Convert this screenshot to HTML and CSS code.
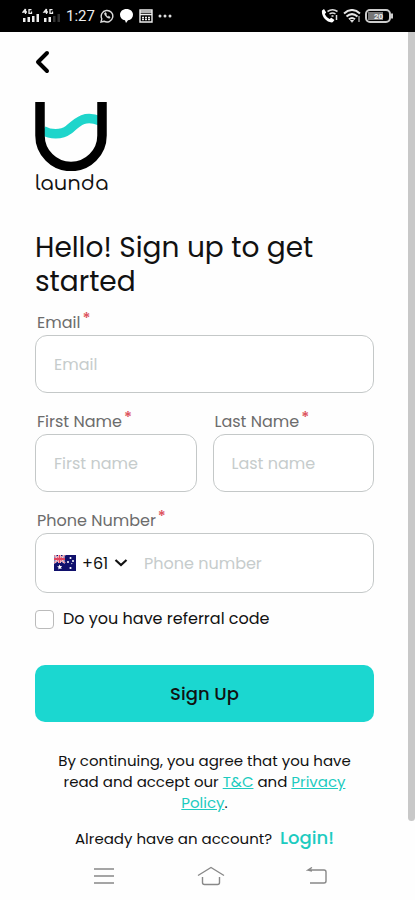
FILE: index.html
```html
<!DOCTYPE html>
<html lang="en">
<head>
<meta charset="utf-8">
<meta name="viewport" content="width=device-width, initial-scale=1">
<title>Launda – Sign up</title>
<link rel="stylesheet" href="styles.css">
</head>
<body>
<header class="status">
  <div class="status-group">
    <svg width="39" height="16" viewBox="0 0 39 16" fill="#eee" aria-hidden="true">
      <g fill="none" stroke="#eee" stroke-width="1.3"><path d="M3.5 1 1 4h4M3.5 1v5M9.500 1.700H7v3.600h2.500V3.500M24.500 1 22 4h4M24.500 1v5M30.500 1.700H28v3.600h2.500V3.500"/></g>
      <path d="M1 10h2.500v4H1zM5.500 9h2.500v5H5.500zM10 8h2.500v6H10zM14.500 6h2.500v8h-2.500zM22 10h2.500v4H22zM26.500 9h2.500v5h-2.500z"/>
      <path fill="#333" d="M31 8h2.500v6H31zM35.500 6H38v8h-2.500z"/>
    </svg>
    <span class="clock">1:27</span>
    <svg width="14" height="14" viewBox="0 0 14 14" fill="none" stroke="#ddd" stroke-width="1.400" aria-hidden="true"><path d="m1 13 .8-3.200A5.800 5.800 0 1 1 4 12.200z"/><path d="M4.600 4c-.6 1.800 2.800 5.600 5 5.200l.5-1.200-1.600-.8-.8.6L6 6l.5-.9-.7-1.500z" fill="#ddd" stroke-width=".6"/></svg>
    <svg width="15" height="14" viewBox="0 0 15 14" fill="#fff" aria-hidden="true"><path d="M7.500 0C3.800 0 1 2.400 1 5.700c0 3 2.200 5.100 5 5.600L7 14l2-2.700c3-.5 5-2.600 5-5.600C14 2.400 11.200 0 7.500 0z"/></svg>
    <svg width="14" height="14" viewBox="0 0 14 14" fill="none" stroke="#eee" stroke-width="1.400" aria-hidden="true"><path d="M1 1h12v12H1zM1 3h12M1 5.500h12"/><path d="M3 8.500h8M3 10.500h8" stroke-dasharray="2 1"/></svg>
    <svg width="14" height="4" viewBox="0 0 14 4" fill="#ddd" aria-hidden="true"><circle cx="2" cy="2" r="1.500"/><circle cx="7" cy="2" r="1.500"/><circle cx="12" cy="2" r="1.500"/></svg>
  </div>
  <div class="status-group status-right">
    <svg width="18" height="14" viewBox="0 0 18 14" aria-hidden="true"><path fill="#fff" d="M1 1.500 3 0l2.200 3.500-1.400 1.600c1 2.200 2.600 3.900 4.800 4.900l1.700-1.300 3.200 2.300-1.800 2.300C6 14.200 0 7.500 1 1.500z"/><path d="M6.500 2.500Q11.500-.8 16.500 2.500M8.500 5q3-2 6 0M10.500 7h2M15.500 6v5" fill="none" stroke="#ddd" stroke-width="1.500"/></svg>
    <svg width="18" height="14" viewBox="0 0 18 14" fill="none" stroke="#e6e6e6" stroke-width="2" aria-hidden="true"><path d="M1 4.500q8-7 16 0M3.500 7.500q5.500-4.800 11 0M6 10.200q3-2.500 6 0"/><path d="m7.500 11.500 1.500 1.800 1.500-1.800zM16 7v6" stroke-width="1"/></svg>
    <svg width="28" height="14" viewBox="0 0 28 14" aria-hidden="true"><rect x="1" y="1" width="24" height="12" rx="4" fill="none" stroke="#ccc" stroke-width="2"/><path fill="#777" d="M3 3h15v8H3z"/><path fill="#ccc" d="M26 4.500h2v5h-2z"/><text class="battery-text" x="9" y="10">20</text></svg>
  </div>
</header>

<main class="screen">
  <button class="back" type="button" aria-label="Back">
    <svg width="16" height="24" viewBox="0 0 16 24" fill="none" stroke="#000" stroke-width="4" stroke-linecap="round" stroke-linejoin="round"><path d="M12 3 3 12l9 9"/></svg>
  </button>

  <div class="brand">
    <svg width="72" height="69" viewBox="0 0 72 69" fill="none" aria-hidden="true">
      <path d="M8 28.500c7 4 18 5 26-1 9-8 16-15 31-8.500" stroke="#1ed5cb" stroke-width="9.500"/>
      <path d="M5 0v33.500a31 31 0 0 0 62 0V0" stroke="#000" stroke-width="9.500"/>
    </svg>
    <span class="brand-name">launda</span>
  </div>

  <h1>Hello! Sign up to get started</h1>

  <form class="form">
    <div class="field">
      <label for="email">Email<sup>*</sup></label>
      <input class="box" id="email" type="email" placeholder="Email">
    </div>
    <div class="pair">
      <div class="field">
        <label for="first">First Name<sup>*</sup></label>
        <input class="box" id="first" type="text" placeholder="First name">
      </div>
      <div class="field">
        <label for="last">Last Name<sup>*</sup></label>
        <input class="box" id="last" type="text" placeholder="Last name">
      </div>
    </div>
    <div class="field">
      <label for="phone">Phone Number<sup>*</sup></label>
      <div class="box phone">
        <svg width="22" height="16" viewBox="0 0 22 16" aria-hidden="true">
          <path fill="#10106c" d="M0 0h22v16H0z"/>
          <path d="m0 0 11 8M11 0 0 8" stroke="#fff" stroke-width="2"/>
          <path d="M5.500 0v8M0 4h11" stroke="#fff" stroke-width="3"/>
          <path d="M5.500 0v8M0 4h11" stroke="#e0455f" stroke-width="1.800"/>
          <path d="m0 0 11 8M11 0 0 8" stroke="#e0455f" stroke-width=".8"/>
          <g fill="#fff"><path d="m5.500 9.500.8 1.600 1.800-.1-1.100 1.400.7 1.700-1.800-.6-1.500 1 .1-1.900-1.500-1 1.800-.4z"/><circle cx="16.500" cy="3" r="1"/><circle cx="14" cy="7" r="1"/><circle cx="19" cy="6" r="1"/><circle cx="16.500" cy="13" r="1.100"/><circle cx="17.800" cy="8.600" r=".6"/></g>
        </svg>
        <select class="code" aria-label="Country code"><option>+61</option></select>
        <svg class="caret" width="14" height="8" viewBox="0 0 14 8" fill="none" stroke="#111" stroke-width="2.200" aria-hidden="true"><path d="m1.500 1 5.500 5 5.500-5"/></svg>
        <input class="phone-input" id="phone" type="tel" placeholder="Phone number">
      </div>
    </div>
    <label class="referral"><input type="checkbox">Do you have referral code</label>
    <button class="submit" type="submit">Sign Up</button>
  </form>

  <p class="terms">By continuing, you agree that you have read and accept our <a href="#terms">T&amp;C</a> and <a href="#privacy">Privacy Policy</a>.</p>
  <p class="account">Already have an account? <a href="#login">Login!</a></p>
  <div class="scroll-thumb"></div>
</main>

<nav class="system-nav">
  <button type="button" aria-label="Recent apps"><svg width="22" height="18" viewBox="0 0 22 18" fill="none" stroke="#888" stroke-width="1.400"><path d="M1 2h20M1 9h20M1 16h20"/></svg></button>
  <button type="button" aria-label="Home"><svg width="28" height="20" viewBox="0 0 28 20" fill="none" stroke="#888" stroke-width="1.400"><path d="M1 9.500 14 1.500l13 8M5.500 11v5.500q0 2 2 2h13q2 0 2-2V11"/></svg></button>
  <button type="button" aria-label="Back"><svg width="22" height="18" viewBox="0 0 22 18" fill="none" stroke="#888" stroke-width="1.400"><path d="M6 .5 2 3h16q2 0 2 2v9q0 2-2 2H4M2 3l4 1"/></svg></button>
</nav>
</body>
</html>
```
FILE: styles.css
```css
* {
  box-sizing: border-box;
}

body {
  margin: 0;
  min-height: 100vh;
  display: flex;
  flex-direction: column;
  background: #fefefe;
  color: #111;
  font-family: Poppins, Inter, "Open Sans", sans-serif;
  font-size: 16px;
}

button,
input,
select {
  font: inherit;
  color: inherit;
}

button {
  border: 0;
  padding: 0;
  background: none;
}

h1,
p {
  margin: 0;
}

.status {
  display: flex;
  justify-content: space-between;
  align-items: center;
  height: 32px;
  padding: 0 22px;
  background: #000;
  color: #eee;
}

.status-group {
  display: flex;
  align-items: center;
  gap: 5px;
}

.status-right {
  gap: 4px;
}

.clock {
  font-family: Roboto, sans-serif;
  font-size: 15px;
}

.battery-text {
  font: bold 8px Roboto, sans-serif;
  fill: #eee;
}

.screen {
  position: relative;
  padding: 18px 41px 0 35px;
}

.back {
  display: block;
  height: 24px;
}

.back svg,
.brand svg,
.system-nav svg {
  display: block;
}

.brand {
  display: flex;
  flex-direction: column;
  align-items: flex-start;
  margin-top: 28px;
}

.brand-name {
  font-family: Comfortaa, Inter, sans-serif;
  font-size: 20px;
  font-weight: 500;
  line-height: 26px;
}

h1 {
  margin-top: 34px;
  font-size: 28px;
  font-weight: 400;
  line-height: 34px;
}

.form {
  display: flex;
  flex-direction: column;
  gap: 16px;
  margin-top: 11px;
}

.field {
  display: flex;
  flex-direction: column;
  min-width: 0;
}

.field label {
  padding-left: 2px;
  line-height: 25px;
  color: #6c6c6c;
}

.field sup {
  margin-left: 2px;
  color: #dd5560;
  font-size: 16px;
  font-weight: 500;
  line-height: 0;
  vertical-align: 4px;
}

.pair {
  display: grid;
  grid-template-columns: 1fr 1fr;
  gap: 16px;
}

.box {
  width: 100%;
  height: 58px;
  padding: 0 18px;
  border: 1px solid #c4c8c8;
  border-radius: 12px;
  background: #fff;
}

.phone {
  display: flex;
  align-items: center;
  height: 60px;
}

.code {
  appearance: none;
  margin-left: 6px;
  padding: 0;
  border: 0;
  background: none;
}

.caret {
  margin: 0 16px 0 5px;
}

.phone-input {
  flex: 1;
  min-width: 0;
  padding: 0;
  border: 0;
  background: none;
}

::placeholder {
  color: #c6cccc;
  opacity: 1;
}

.referral {
  display: flex;
  align-items: center;
  gap: 9px;
  line-height: 20px;
}

.referral input {
  appearance: none;
  width: 19px;
  height: 19px;
  margin: 0;
  border: 1px solid #bbb;
  border-radius: 4px;
  background: #fff;
}

.submit {
  height: 57px;
  margin-top: 20px;
  border-radius: 10px;
  background: #1bd7d0;
  font-size: 18px;
  font-weight: 500;
}

.terms {
  margin-top: 28px;
  padding: 0 16px;
  font-size: 15px;
  line-height: 21px;
  text-align: center;
}

a {
  color: #1ccbc0;
}

.account {
  margin-top: 13px;
  font-size: 15px;
  line-height: 24px;
  text-align: center;
}

.account a {
  margin-left: 4px;
  font-size: 18px;
  font-weight: 500;
  text-decoration: none;
}

.scroll-thumb {
  position: absolute;
  top: 0;
  right: 0;
  bottom: 30px;
  width: 7px;
  border-radius: 0 0 4px 4px;
  background: #c8c8c8;
}

.system-nav {
  display: flex;
  justify-content: space-between;
  align-items: center;
  height: 49px;
  padding: 0 87px 0 93px;
}
```
